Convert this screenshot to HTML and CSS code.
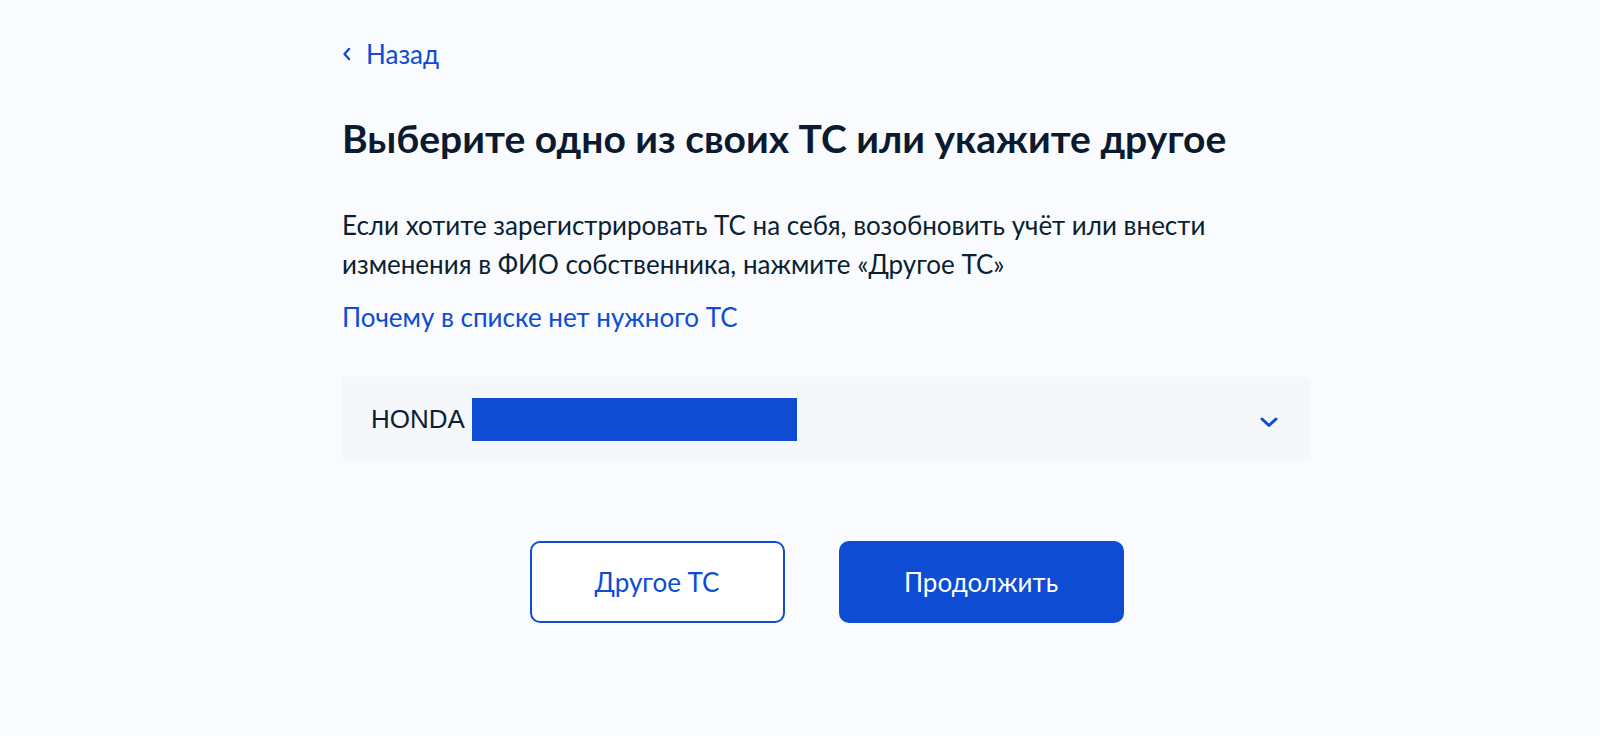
FILE: index.html
```html
<!DOCTYPE html>
<html lang="ru">

<head>
    <meta charset="UTF-8">
    <meta name="viewport" content="width=device-width, initial-scale=1.0">
    <title>Выбор ТС</title>
    <link rel="stylesheet" href="styles.css">
</head>

<body>
    <div class="container">
        <a class="back" href="#">
            <svg class="back-icon" width="10" height="14" viewBox="0 0 10 14">
                <path d="M7 2 L2.5 7 L7 12" fill="none" stroke="#0d4cd3" stroke-width="2.4" stroke-linecap="round" stroke-linejoin="round" />
            </svg>
            <span>Назад</span>
        </a>

        <h1>Выберите одно из своих ТС или укажите другое</h1>

        <p class="hint">Если хотите зарегистрировать ТС на себя, возобновить учёт или внести изменения в ФИО собственника, нажмите «Другое ТС»</p>

        <a class="why" href="#">Почему в списке нет нужного ТС</a>

        <div class="select">
            <div class="select-value">
                <span>HONDA</span>
                <span class="mask"></span>
            </div>
            <svg class="chevron" width="20" height="14" viewBox="0 0 20 14">
                <path d="M3 4 L10 10.5 L17 4" fill="none" stroke="#0d4cd3" stroke-width="3" stroke-linecap="round" stroke-linejoin="round" />
            </svg>
        </div>

        <div class="actions">
            <button class="btn btn-outline">Другое ТС</button>
            <button class="btn btn-primary">Продолжить</button>
        </div>
    </div>
</body>

</html>
```

FILE: styles.css
```css
body {
    margin: 0;
    background-color: #f9fbfe;
    font-family: Lato, "Noto Sans", Arial, sans-serif;
    color: #0b1f33;
}

.container {
    width: 969px;
    padding: 39px 0 0 342px;
}

.back {
    display: inline-flex;
    align-items: center;
    gap: 14px;
    color: #0d4cd3;
    text-decoration: none;
    font-size: 26px;
    line-height: 30px;
}

.back-icon {
    display: block;
}

h1 {
    margin: 47px 0 0;
    font-size: 39px;
    line-height: 44px;
    font-weight: 700;
    color: #0b1a2e;
}

.hint {
    margin: 46px 0 0;
    font-size: 26px;
    line-height: 39px;
}

.why {
    display: block;
    margin-top: 17px;
    color: #0d4cd3;
    text-decoration: none;
    font-size: 26px;
    line-height: 32px;
}

.select {
    display: flex;
    align-items: center;
    justify-content: space-between;
    height: 84px;
    margin-top: 44px;
    padding: 0 32px 0 29px;
    background-color: #f5f7fa;
    border-radius: 4px;
}

.select-value {
    display: flex;
    align-items: center;
    gap: 7px;
    font-family: "Liberation Sans", Arial, sans-serif;
    font-size: 26px;
}

.mask {
    display: inline-block;
    width: 325px;
    height: 43px;
    background-color: #0d4cd3;
}

.chevron {
    display: block;
    margin-top: 6px;
}

.actions {
    display: flex;
    justify-content: center;
    gap: 54px;
    margin-top: 80px;
}

.btn {
    height: 82px;
    border-radius: 10px;
    font-family: Lato, "Noto Sans", Arial, sans-serif;
    font-size: 26px;
    cursor: pointer;
}

.btn-outline {
    width: 255px;
    background-color: #ffffff;
    border: 2px solid #0d4cd3;
    color: #0d4cd3;
}

.btn-primary {
    width: 285px;
    background-color: #0d4cd3;
    border: 2px solid #0d4cd3;
    color: #ffffff;
}
```
